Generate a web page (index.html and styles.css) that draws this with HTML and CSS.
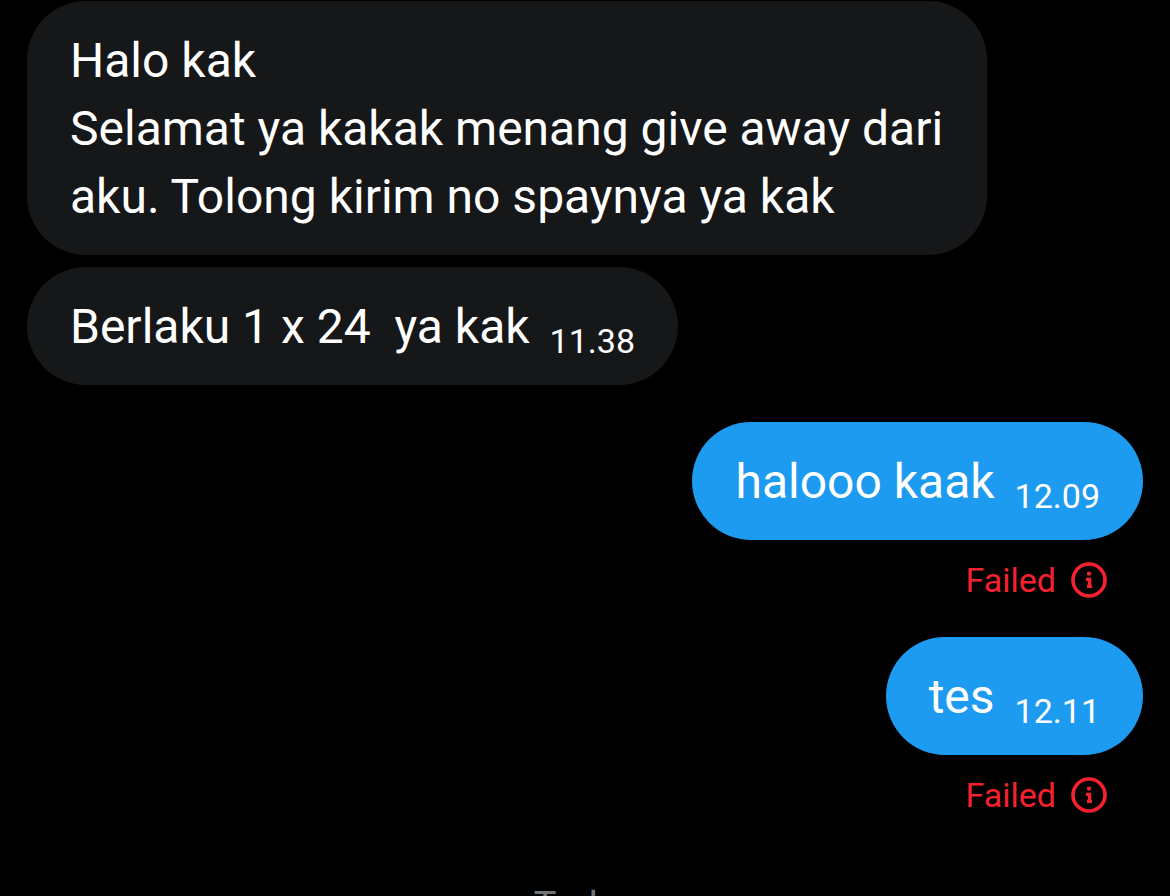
FILE: index.html
```html
<!DOCTYPE html>
<html lang="id">
<head>
    <meta charset="UTF-8">
    <meta name="viewport" content="width=device-width, initial-scale=1.0">
    <title>Pesan</title>
    <link rel="stylesheet" href="styles.css">
</head>
<body>
    <main class="chat">
        <div class="message received">
            <p class="text">Halo kak<br>Selamat ya kakak menang give away dari aku. Tolong kirim no spaynya ya kak</p>
        </div>
        <div class="message received">
            <p class="text">Berlaku 1 x 24&nbsp; ya kak</p>
            <time class="time">11.38</time>
        </div>
        <div class="message sent">
            <p class="text">halooo kaak</p>
            <time class="time">12.09</time>
        </div>
        <button type="button" class="failed">
            Failed
            <svg class="failed-icon" viewBox="0 0 36 36" aria-hidden="true">
                <circle cx="18" cy="18" r="16" fill="none" stroke="currentColor" stroke-width="3.6"/>
                <circle cx="18" cy="11.6" r="2.2" fill="currentColor"/>
                <path d="M15 17.4h3.6v7M16 24.4h5" fill="none" stroke="currentColor" stroke-width="3.4"/>
            </svg>
        </button>
        <div class="message sent">
            <p class="text">tes</p>
            <time class="time">12.11</time>
        </div>
        <button type="button" class="failed">
            Failed
            <svg class="failed-icon" viewBox="0 0 36 36" aria-hidden="true">
                <circle cx="18" cy="18" r="16" fill="none" stroke="currentColor" stroke-width="3.6"/>
                <circle cx="18" cy="11.6" r="2.2" fill="currentColor"/>
                <path d="M15 17.4h3.6v7M16 24.4h5" fill="none" stroke="currentColor" stroke-width="3.4"/>
            </svg>
        </button>
        <p class="day">Today</p>
    </main>
</body>
</html>
```
FILE: styles.css
```css
* {
    box-sizing: border-box;
}
body {
    margin: 0;
    background-color: #000;
    color: #fff;
    font-family: Roboto, "Open Sans", sans-serif;
}
.chat {
    display: flex;
    flex-direction: column;
    align-items: flex-start;
    height: 100vh;
    padding: 1px 27px 0;
    overflow: hidden;
}
.message {
    display: flex;
    flex-shrink: 0;
    align-items: flex-end;
    gap: 20px;
    max-width: 86%;
    padding: 26px 43px 24px;
    border-radius: 59px;
}
.received {
    margin-bottom: 12px;
    background-color: #161719;
}
.sent {
    align-self: flex-end;
    margin-top: 25px;
    background-color: #1d9bf0;
}
.text {
    margin: 0;
    font-size: 48px;
    line-height: 68px;
}
.time {
    font-size: 34px;
    line-height: 40px;
}
.failed {
    display: flex;
    flex-shrink: 0;
    align-items: center;
    align-self: flex-end;
    gap: 15px;
    margin: 17px 36px 9px 0;
    padding: 0;
    border: none;
    background: none;
    color: #f4212e;
    font-family: inherit;
    font-size: 34px;
    line-height: 46px;
    cursor: pointer;
}
.failed-icon {
    width: 36px;
    height: 36px;
}
.day {
    flex-shrink: 0;
    align-self: center;
    margin: 55px 0 0;
    color: #71767b;
    font-size: 38px;
    line-height: 48px;
}
```
